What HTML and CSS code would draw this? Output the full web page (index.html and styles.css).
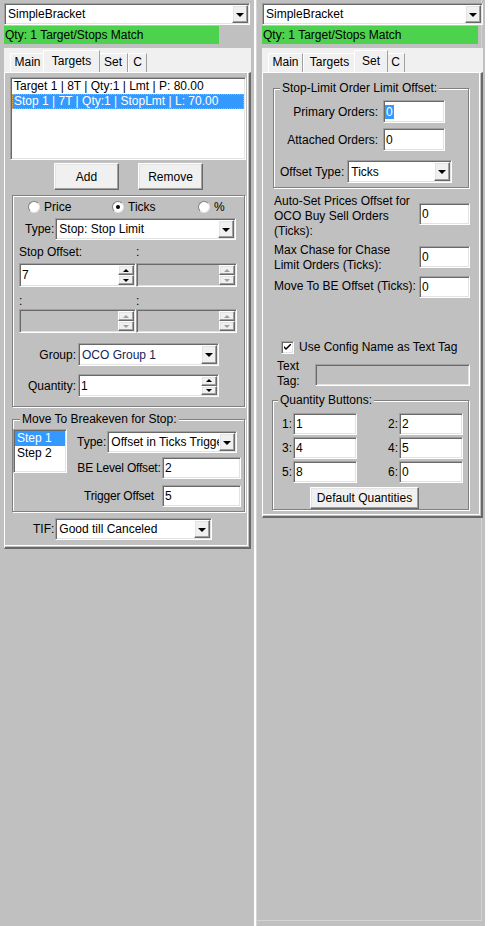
FILE: index.html
```html
<!DOCTYPE html>
<html lang="en">
<head>
<meta charset="UTF-8">
<meta name="viewport" content="width=device-width, initial-scale=1">
<title>SimpleBracket</title>
<link rel="stylesheet" href="styles.css">
</head>
<body>

<!-- Targets tab -->
<div class="pane pane-left">
  <div class="combo sunken combo-config">
    <span class="combo-text">SimpleBracket</span>
    <span class="drop-btn raised"><i class="arrow"></i></span>
  </div>
  <div class="status">Qty: 1 Target/Stops Match</div>
  <div class="tabs">
    <span class="tab tab-main">Main</span>
    <span class="tab tab-targets active">Targets</span>
    <span class="tab tab-set">Set</span>
    <span class="tab tab-c">C</span>
  </div>

  <div class="page page-targets">
    <div class="listbox sunken orders">
      <div class="list-item">Target 1 | 8T | Qty:1 | Lmt | P: 80.00</div>
      <div class="list-item selected">Stop 1 | 7T | Qty:1 | StopLmt | L: 70.00</div>
    </div>

    <div class="btn-row">
      <button class="btn raised">Add</button>
      <button class="btn raised">Remove</button>
    </div>

    <div class="group order-group">
      <div class="radio-row">
        <span class="radio"><i class="radio-mark"></i>Price</span>
        <span class="radio"><i class="radio-mark checked"></i>Ticks</span>
        <span class="radio"><i class="radio-mark"></i>%</span>
      </div>

      <div class="row type-row">
        <span class="lbl">Type:</span>
        <div class="combo sunken w-type">
          <span class="combo-text">Stop: Stop Limit</span>
          <span class="drop-btn raised"><i class="arrow"></i></span>
        </div>
      </div>

      <div class="offset-grid offset-labels"><span>Stop Offset:</span><span>:</span></div>
      <div class="offset-grid offset-spins">
        <div class="spin sunken">
          <span class="spin-text">7</span>
          <span class="spin-btns"><span class="spin-btn raised"><i class="tri-up"></i></span><span class="spin-btn raised"><i class="tri-down"></i></span></span>
        </div>
        <div class="spin sunken disabled">
          <span class="spin-text"></span>
          <span class="spin-btns"><span class="spin-btn raised"><i class="tri-up"></i></span><span class="spin-btn raised"><i class="tri-down"></i></span></span>
        </div>
      </div>
      <div class="offset-grid offset-labels-2"><span>:</span><span>:</span></div>
      <div class="offset-grid offset-spins-2">
        <div class="spin sunken disabled">
          <span class="spin-text"></span>
          <span class="spin-btns"><span class="spin-btn raised"><i class="tri-up"></i></span><span class="spin-btn raised"><i class="tri-down"></i></span></span>
        </div>
        <div class="spin sunken disabled">
          <span class="spin-text"></span>
          <span class="spin-btns"><span class="spin-btn raised"><i class="tri-up"></i></span><span class="spin-btn raised"><i class="tri-down"></i></span></span>
        </div>
      </div>

      <div class="row group-row">
        <span class="lbl lbl-right">Group:</span>
        <div class="combo sunken w-group">
          <span class="combo-text oco">OCO Group 1</span>
          <span class="drop-btn raised"><i class="arrow"></i></span>
        </div>
      </div>
      <div class="row qty-row">
        <span class="lbl lbl-right">Quantity:</span>
        <div class="spin sunken w-qty">
          <span class="spin-text">1</span>
          <span class="spin-btns"><span class="spin-btn raised"><i class="tri-up"></i></span><span class="spin-btn raised"><i class="tri-down"></i></span></span>
        </div>
      </div>
    </div>

    <div class="group be-group">
      <span class="group-title">Move To Breakeven for Stop:</span>
      <div class="be-body">
        <div class="listbox sunken steps">
          <div class="list-item selected-plain">Step 1</div>
          <div class="list-item">Step 2</div>
        </div>
        <div class="be-fields">
          <div class="row be-type">
            <span class="lbl">Type:</span>
            <div class="combo sunken w-betype">
              <span class="combo-text">Offset in Ticks Trigger</span>
              <span class="drop-btn raised"><i class="arrow"></i></span>
            </div>
          </div>
          <div class="row be-row">
            <span class="be-lbl">BE Level Offset:</span>
            <div class="edit sunken w-be">2</div>
          </div>
          <div class="row be-row trigger-row">
            <span class="be-lbl">Trigger Offset</span>
            <div class="edit sunken w-be">5</div>
          </div>
        </div>
      </div>
    </div>

    <div class="row tif-row">
      <span class="lbl">TIF:</span>
      <div class="combo sunken w-tif">
        <span class="combo-text">Good till Canceled</span>
        <span class="drop-btn raised"><i class="arrow"></i></span>
      </div>
    </div>
  </div>
</div>

<!-- Set tab -->
<div class="pane pane-right">
  <div class="combo sunken combo-config">
    <span class="combo-text">SimpleBracket</span>
    <span class="drop-btn raised"><i class="arrow"></i></span>
  </div>
  <div class="status">Qty: 1 Target/Stops Match</div>
  <div class="tabs">
    <span class="tab tab-main">Main</span>
    <span class="tab tab-targets">Targets</span>
    <span class="tab tab-set active">Set</span>
    <span class="tab tab-c">C</span>
  </div>

  <div class="page page-set">
    <div class="group limit-group">
      <span class="group-title">Stop-Limit Order Limit Offset:</span>
      <div class="limit-grid">
        <span class="lbl-right">Primary Orders:</span>
        <div class="edit sunken"><span class="sel-text">0</span></div>
        <span class="lbl-right">Attached Orders:</span>
        <div class="edit sunken">0</div>
      </div>
      <div class="row offset-type-row">
        <span class="lbl">Offset Type:</span>
        <div class="combo sunken w-offtype">
          <span class="combo-text">Ticks</span>
          <span class="drop-btn raised"><i class="arrow"></i></span>
        </div>
      </div>
    </div>

    <div class="set-row auto-row">
      <span class="set-lbl">Auto-Set Prices Offset for<br>OCO Buy Sell Orders<br>(Ticks):</span>
      <div class="edit sunken w-set">0</div>
    </div>
    <div class="set-row chase-row">
      <span class="set-lbl">Max Chase for Chase<br>Limit Orders (Ticks):</span>
      <div class="edit sunken w-set">0</div>
    </div>
    <div class="set-row move-row">
      <span class="set-lbl">Move To BE Offset (Ticks):</span>
      <div class="edit sunken w-set">0</div>
    </div>

    <div class="row check-row">
      <span class="checkbox sunken"><svg width="7" height="7" viewBox="0 0 7 7"><path d="M0 2l2 2 5-5v2l-5 5-2-2z" fill="#000"/></svg></span>
      <span>Use Config Name as Text Tag</span>
    </div>

    <div class="set-row tag-row">
      <span class="tag-lbl">Text<br>Tag:</span>
      <div class="edit sunken disabled w-tag"></div>
    </div>

    <div class="group qty-group">
      <span class="group-title">Quantity Buttons:</span>
      <div class="qty-grid">
        <span class="lbl-right">1:</span><div class="edit sunken">1</div>
        <span class="lbl-right">2:</span><div class="edit sunken">2</div>
        <span class="lbl-right">3:</span><div class="edit sunken">4</div>
        <span class="lbl-right">4:</span><div class="edit sunken">5</div>
        <span class="lbl-right">5:</span><div class="edit sunken">8</div>
        <span class="lbl-right">6:</span><div class="edit sunken">0</div>
      </div>
      <button class="btn raised btn-defaults">Default Quantities</button>
    </div>
  </div>
</div>

</body>
</html>
```

FILE: styles.css
```css
* {
  box-sizing: border-box;
}
body {
  margin: 0;
  height: 926px;
  display: flex;
  background: #fff;
  color: #000;
  font: 12px/14px "Liberation Sans", Arial, sans-serif;
  overflow: hidden;
}

/* classic 3d edges */
.sunken {
  border: 1px solid;
  border-color: #a0a0a0 #fff #fff #a0a0a0;
  box-shadow: inset 1px 1px 0 #696969, inset -1px -1px 0 #e3e3e3;
  padding: 1px;
  background: #fff;
}
.raised {
  border: 1px solid;
  border-color: #fff #696969 #696969 #fff;
  box-shadow: inset -1px -1px 0 #a0a0a0, inset 1px 1px 0 #e3e3e3;
  background: #f0f0f0;
}
.disabled {
  background: #c0c0c0;
}

/* panes */
.pane {
  height: 926px;
  background: #c0c0c0;
  padding: 3px 0 0 4px;
  flex: none;
}
.pane-left {
  width: 256px;
  border-right: 2px solid #fff;
}
.pane-right {
  width: 229px;
  padding-left: 5px;
  border-left: 1px solid #d4d4d4;
  box-shadow: inset -3px -5px 0 #c0c0c0, inset -4px -6px 0 #d4d4d4;
}

/* combo box */
.combo {
  display: flex;
  height: 22px;
}
.combo-text {
  flex: 1;
  padding-left: 2px;
  white-space: nowrap;
  overflow: hidden;
  align-self: center;
}
.drop-btn {
  flex: none;
  width: 16px;
  display: flex;
  align-items: center;
  justify-content: center;
}
.arrow {
  width: 0;
  height: 0;
  border-left: 4px solid transparent;
  border-right: 4px solid transparent;
  border-top: 4px solid #000;
  margin-top: 1px;
}
.pane-left .combo-config { width: 246px; }
.pane-right .combo-config { width: 221px; }

.status {
  margin-top: 1px;
  height: 18px;
  line-height: 18px;
  padding-left: 1px;
  background: #4cd24c;
  white-space: nowrap;
}
.pane-left .status { width: 215px; }
.pane-right .status { width: 216px; }

/* tab strip */
.tabs {
  margin-top: 4px;
  height: 24px;
  display: flex;
  align-items: flex-end;
  padding-left: 6px;
  background: #f0f0f0;
}
.pane-left .tabs { width: 247px; }
.pane-right .tabs { width: 221px; }
.tab {
  flex: none;
  height: 19px;
  line-height: 17px;
  text-align: center;
  background: #f0f0f0;
  border: 1px solid;
  border-bottom: 0;
  border-color: #fff #a0a0a0 #a0a0a0 #fff;
}
.tab.active {
  height: 22px;
  line-height: 20px;
  margin: 0 -2px;
  position: relative;
  z-index: 1;
}
.tab-main { width: 35px; }
.tab-targets { width: 53px; }
.tab-set { width: 30px; }
.tab-c { width: 19px; }
.tab-targets.active { width: 57px; }
.tab-set.active { width: 34px; }

.page {
  border-style: solid;
  border-width: 1px 2px 2px 1px;
  border-color: #fff #696969 #696969 #fff;
  box-shadow: inset -1px -1px 0 #c0c0c0, inset -2px -2px 0 #fff;
}
.page-targets {
  width: 247px;
  height: 477px;
}
.page-set {
  width: 221px;
  height: 446px;
}

/* group boxes */
.group {
  border: 1px solid #808080;
  box-shadow: inset 1px 1px 0 #fff, 1px 1px 0 #fff;
}
.group-title {
  display: table;
  margin: -8px 0 0 7px;
  padding: 0 2px;
  background: #c0c0c0;
  white-space: nowrap;
}

.row {
  display: flex;
  align-items: center;
}
.lbl {
  white-space: nowrap;
}
.lbl-right {
  text-align: right;
  white-space: nowrap;
}

/* list boxes */
.listbox {
  padding: 1px;
  overflow: hidden;
}
.list-item {
  height: 15px;
  line-height: 15px;
  padding-left: 2px;
  white-space: nowrap;
}
.list-item.selected {
  background: #3399ff;
  color: #fff;
  outline: 1px dotted #e8a448;
  outline-offset: -1px;
}
.list-item.selected-plain {
  background: #3399ff;
  color: #fff;
}
.orders {
  margin: 4px 0 0 5px;
  width: 236px;
  height: 83px;
}

.btn {
  font: inherit;
  color: #000;
  padding: 0;
}
.btn-row {
  display: flex;
  gap: 19px;
  margin: 3px 0 0 49px;
}
.btn-row .btn {
  width: 65px;
  height: 27px;
}

/* order settings */
.order-group {
  margin: 5px 0 0 7px;
  width: 233px;
  height: 212px;
}
.radio-row {
  margin-top: 4px;
  display: grid;
  grid-template-columns: 84px 86px auto;
  padding-left: 15px;
}
.radio {
  display: flex;
  align-items: center;
  gap: 4px;
  height: 13px;
}
.radio-mark {
  width: 12px;
  height: 12px;
  border-radius: 50%;
  background: #fff;
  border: 1px solid;
  border-color: #808080 #e3e3e3 #e3e3e3 #808080;
  display: grid;
  place-items: center;
}
.radio-mark.checked::after {
  content: "";
  width: 4px;
  height: 4px;
  border-radius: 50%;
  background: #000;
}

.type-row {
  margin-top: 5px;
  padding-left: 12px;
  gap: 1px;
}
.w-type { width: 181px; }

.offset-grid {
  display: grid;
  grid-template-columns: 117px 101px;
  padding-left: 6px;
}
.offset-labels { margin-top: 5px; }
.offset-spins { margin-top: 4px; }
.offset-labels-2 { margin-top: 7px; }
.offset-spins-2 { margin-top: 1px; }
.offset-grid .spin { height: 24px; }

/* spinner */
.spin {
  display: flex;
}
.spin-text {
  flex: 1;
  align-self: center;
  padding-left: 1px;
}
.spin-btns {
  flex: none;
  width: 16px;
  display: flex;
  flex-direction: column;
}
.spin-btn {
  flex: 1;
  display: flex;
  align-items: center;
  justify-content: center;
}
.tri-up,
.tri-down {
  width: 0;
  height: 0;
  border-left: 3px solid transparent;
  border-right: 3px solid transparent;
}
.tri-up { border-bottom: 3px solid #000; }
.tri-down { border-top: 3px solid #000; }
.disabled .tri-up { border-bottom-color: #a0a0a0; }
.disabled .tri-down { border-top-color: #a0a0a0; }

.group-row {
  margin-top: 10px;
}
.qty-row {
  margin-top: 8px;
}
.group-row .lbl-right,
.qty-row .lbl-right {
  width: 63px;
  margin-right: 2px;
}
.w-group { width: 141px; height: 23px; }
.w-qty { width: 141px; height: 23px; }
.oco { color: #14245a; }

/* breakeven */
.be-group {
  margin: 12px 0 0 7px;
  width: 233px;
  height: 93px;
}
.be-body {
  display: flex;
}
.steps {
  margin-top: 3px;
  width: 54px;
  height: 44px;
}
.be-fields {
  margin-left: 9px;
}
.be-type {
  margin-top: 5px;
  padding-left: 1px;
  gap: 1px;
}
.w-betype { width: 130px; }
.be-row {
  margin-top: 4px;
}
.trigger-row {
  margin-top: 6px;
}
.be-lbl {
  width: 86px;
  text-align: center;
  white-space: nowrap;
  letter-spacing: -0.2px;
}
.edit {
  display: flex;
  align-items: center;
  padding: 1px 2px;
  height: 22px;
}
.w-be { width: 79px; }

.tif-row {
  margin-top: 6px;
  padding-left: 28px;
  gap: 1px;
}
.w-tif { width: 157px; }

/* set tab */
.limit-group {
  margin: 15px 0 0 10px;
  width: 196px;
  height: 100px;
}
.limit-group .group-title {
  margin-left: 6px;
}
.limit-grid {
  margin-top: 5px;
  display: grid;
  grid-template-columns: 106px 62px;
  grid-auto-rows: 23px;
  column-gap: 3px;
  row-gap: 5px;
  align-items: center;
}
.limit-grid .lbl-right {
  padding-right: 2px;
}
.limit-grid .edit {
  height: 23px;
}
.sel-text {
  background: #3399ff;
  color: #fff;
  padding: 0 1px;
  margin-left: -1px;
}
.offset-type-row {
  margin-top: 9px;
  padding-left: 6px;
  gap: 3px;
}
.w-offtype { width: 105px; height: 23px; }

.set-row {
  display: flex;
  align-items: flex-start;
  padding-left: 11px;
}
.set-lbl {
  width: 145px;
  line-height: 15px;
  white-space: nowrap;
}
.w-set { width: 51px; }
.auto-row { margin-top: 6px; }
.auto-row .edit { margin-top: 9px; }
.chase-row { margin-top: 4px; }
.chase-row .edit { margin-top: 3px; }
.move-row { margin-top: 3px; }
.move-row .set-lbl { margin-top: 3px; }

.check-row {
  margin-top: 42px;
  padding-left: 18px;
  gap: 5px;
}
.checkbox {
  width: 13px;
  height: 13px;
  display: flex;
  align-items: center;
  justify-content: center;
}

.tag-row {
  margin-top: 5px;
  padding-left: 14px;
}
.tag-lbl {
  width: 38px;
  line-height: 15px;
}
.w-tag {
  margin-top: 5px;
  width: 155px;
}

.qty-group {
  margin: 11px 0 0 9px;
  width: 197px;
  height: 110px;
}
.qty-group .group-title {
  margin-left: 5px;
}
.qty-grid {
  margin-top: 6px;
  display: grid;
  grid-template-columns: 20px 64px 42px 64px;
  grid-auto-rows: 22px;
  row-gap: 2px;
  align-items: center;
}
.qty-grid .lbl-right {
  padding-right: 1px;
}
.btn-defaults {
  display: block;
  margin: 4px 0 0 37px;
  width: 109px;
  height: 22px;
}
```
